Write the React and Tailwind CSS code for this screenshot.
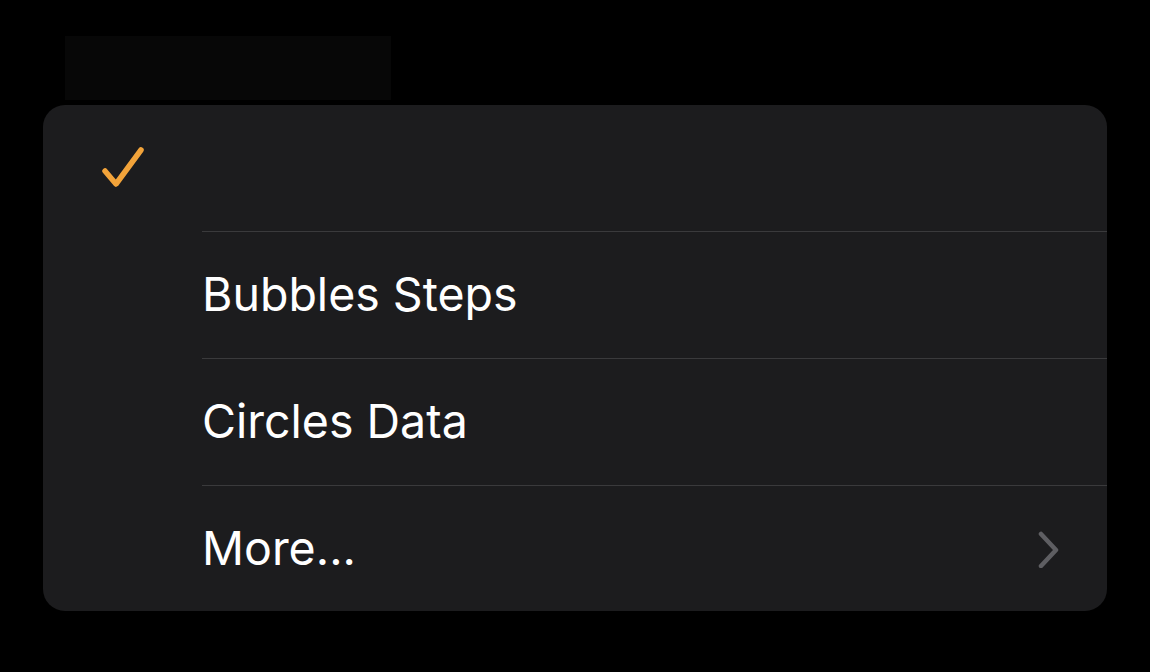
import React from 'react';

const items = ['', 'Bubbles Steps', 'Circles Data', 'More...'];

const Check = () => (
  <svg width="48" height="48" viewBox="0 0 48 48" fill="none">
    <path d="M5 27 L16 40 L41 6" stroke="#f2a33a" strokeWidth="5.5" strokeLinecap="round" strokeLinejoin="round" />
  </svg>
);

const Chevron = () => (
  <svg width="24" height="38" viewBox="0 0 24 38" fill="none">
    <path d="M4 4 L19 20 L4 36" stroke="#5e5e62" strokeWidth="4.5" strokeLinecap="round" strokeLinejoin="round" />
  </svg>
);

export default function App() {
  return (
    <div className="h-[672px] w-[1150px] bg-black pt-[36px]" style={{ fontFamily: 'Inter, "Liberation Sans", sans-serif' }}>
      <div className="ml-[65px] h-[64px] w-[326px] bg-[#070707]" />
      <div className="ml-[43px] mt-[5px] w-[1064px] overflow-hidden rounded-[22px] bg-[#1c1c1e]">
        {items.map((label, i) => (
          <div key={i} className={`flex items-stretch ${i === 0 ? 'h-[126px]' : i === 3 ? 'h-[126px]' : 'h-[127px]'}`}>
            <div className="flex w-[159px] items-center pl-[57px]">
              {i === 0 && <Check />}
            </div>
            <div className={`flex flex-1 items-center justify-between pr-[46px] ${i > 0 ? 'border-t border-[#3a3a3c]' : ''}`}>
              <span className="text-[46.5px] text-white">{label}</span>
              {label === 'More...' && <Chevron />}
            </div>
          </div>
        ))}
      </div>
    </div>
  );
}
